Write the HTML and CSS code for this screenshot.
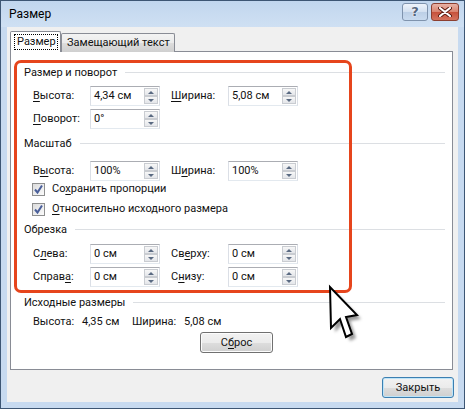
FILE: index.html
```html
<!DOCTYPE html>
<html lang="ru">
<head>
<meta charset="utf-8">
<title>Размер</title>
<link rel="stylesheet" href="styles.css">
</head>
<body>
<div class="window">
  <div class="titlebar">
    <span class="title">Размер</span>
    <div class="tb-btns">
      <span class="tb-btn help">?</span>
      <span class="tb-btn close">
        <svg width="14" height="10" viewBox="0 0 14 10"><path d="M2 1 L12 9 M12 1 L2 9" stroke="#5a1a10" stroke-width="4" stroke-linecap="round"/><path d="M2 1 L12 9 M12 1 L2 9" stroke="#fff" stroke-width="2.2" stroke-linecap="round"/></svg>
      </span>
    </div>
  </div>
  <div class="face">
    <div class="tabs">
      <div class="tab active"><span class="focus">Размер</span></div>
      <div class="tab">Замещающий текст</div>
    </div>
    <div class="panel">
      <div class="highlight"></div>

      <div class="grp-h g1">Размер и поворот</div>
      <div class="grid g-r1">
        <span class="lbl"><u>В</u>ысота:</span>
        <div class="spin"><span class="val">4,34 см</span><span class="arrows"><i class="up"></i><i class="dn"></i></span></div>
        <span class="lbl"><u>Ш</u>ирина:</span>
        <div class="spin"><span class="val">5,08 см</span><span class="arrows"><i class="up"></i><i class="dn"></i></span></div>
        <span class="lbl"><u>П</u>оворот:</span>
        <div class="spin"><span class="val">0°</span><span class="arrows"><i class="up"></i><i class="dn"></i></span></div>
      </div>

      <div class="grp-h g2">Масштаб</div>
      <div class="grid g-r2">
        <span class="lbl">В<u>ы</u>сота:</span>
        <div class="spin"><span class="val">100%</span><span class="arrows"><i class="up"></i><i class="dn"></i></span></div>
        <span class="lbl">Ш<u>и</u>рина:</span>
        <div class="spin"><span class="val">100%</span><span class="arrows"><i class="up"></i><i class="dn"></i></span></div>
      </div>
      <div class="check c1"><span class="box"><svg width="11" height="11" viewBox="0 0 11 11"><path d="M2 5.5 L4.5 8.5 L9 1.5" fill="none" stroke="#4a5f9a" stroke-width="2"/></svg></span><span>Со<u>х</u>ранить пропорции</span></div>
      <div class="check c2"><span class="box"><svg width="11" height="11" viewBox="0 0 11 11"><path d="M2 5.5 L4.5 8.5 L9 1.5" fill="none" stroke="#4a5f9a" stroke-width="2"/></svg></span><span><u>О</u>тносительно исходного размера</span></div>

      <div class="grp-h g3">Обрезка</div>
      <div class="grid g-r3">
        <span class="lbl">С<u>л</u>ева:</span>
        <div class="spin"><span class="val">0 см</span><span class="arrows"><i class="up"></i><i class="dn"></i></span></div>
        <span class="lbl">Св<u>е</u>рху:</span>
        <div class="spin"><span class="val">0 см</span><span class="arrows"><i class="up"></i><i class="dn"></i></span></div>
        <span class="lbl">Справ<u>а</u>:</span>
        <div class="spin"><span class="val">0 см</span><span class="arrows"><i class="up"></i><i class="dn"></i></span></div>
        <span class="lbl">С<u>н</u>изу:</span>
        <div class="spin"><span class="val">0 см</span><span class="arrows"><i class="up"></i><i class="dn"></i></span></div>
      </div>

      <div class="grp-h g4">Исходные размеры</div>
      <div class="orig">
        <span class="o1">Высота:</span><span class="o2">4,35 см</span><span class="o3">Ширина:</span><span>5,08 см</span>
      </div>
      <div class="reset-row"><button class="btn reset">С<u>б</u>рос</button></div>
    </div>
    <div class="footer"><button class="btn default">Закрыть</button></div>
  </div>
  <svg class="cursor" width="50" height="65" viewBox="0 0 50 65">
    <defs><filter id="bl" x="-20%" y="-20%" width="140%" height="140%"><feGaussianBlur stdDeviation="1.6"/></filter></defs>
    <polygon points="10,7 11,48 20,39 26,57 32,54 26,37 37,35" transform="translate(4,4)" fill="rgba(0,0,0,0.4)" filter="url(#bl)"/>
    <polygon points="10,7 11,48 20,39 26,57 32,54 26,37 37,35" fill="#fff" stroke="#000" stroke-width="2" stroke-linejoin="miter"/>
  </svg>
</div>
</body>
</html>
```

FILE: styles.css
```css
* { box-sizing: border-box; }
html, body { margin: 0; padding: 0; background: #fff; }
body {
  font-family: Roboto, "Noto Sans", sans-serif;
  font-size: 11px;
  line-height: 16px;
  color: #111;
  white-space: nowrap;
}
u { text-decoration: underline; text-underline-offset: 2px; }

.window {
  position: relative;
  width: 465px;
  height: 409px;
  border: 1px solid #3d5674;
  background: #c7daf0;
  display: flex;
  flex-direction: column;
}

.titlebar {
  height: 26px;
  display: flex;
  align-items: flex-start;
  padding: 0 5px 0 8px;
  background: linear-gradient(#c1d6ee, #cfe0f3);
}
.title { margin-top: 5px; color: #000; font-size: 12px; }
.tb-btns { margin-left: auto; display: flex; gap: 3px; padding-top: 2px; }
.tb-btn {
  width: 26px;
  height: 18px;
  border-radius: 3px;
  display: flex;
  align-items: center;
  justify-content: center;
}
.help {
  border: 1px solid #7f93ad;
  background: linear-gradient(#eef4fb, #d2e0f0 50%, #bccfe6 51%, #c9dbef);
  color: #56677e;
  font-family: "DejaVu Sans", sans-serif;
  font-weight: bold;
  font-size: 13px;
  text-shadow: 0 0 2px #fff, 0 0 1px #fff;
}
.close {
  width: 28px;
  border: 1px solid #8c3f30;
  background: linear-gradient(#e8b3a6, #d9826e 50%, #c7513b 51%, #d4735e);
}

.face {
  flex: 1;
  margin: 0 6px 6px 6px;
  background: #f0f0f0;
  padding: 4px 4px 0 3px;
  display: flex;
  flex-direction: column;
}

.tabs {
  display: flex;
  align-items: flex-end;
  height: 21px;
  margin-bottom: -1px;
  position: relative;
  z-index: 1;
}
.tab {
  height: 19px;
  padding: 0 4px 0 5px;
  border: 1px solid #898c95;
  border-bottom: none;
  background: linear-gradient(#f3f3f3, #ebebeb 50%, #dddddd 51%, #cfcfcf);
  border-radius: 2px 2px 0 0;
  display: flex;
  align-items: center;
  width: 114px;
}
.tab.active {
  height: 21px;
  width: 51px;
  background: #fff;
  padding: 2px 2px 0 3px;
  align-items: flex-start;
}
.focus {
  border: 1px dotted #000;
  padding: 0 2px;
  line-height: 14px;
  height: 16px;
  width: 44px;
}

.panel {
  position: relative;
  height: 319px;
  margin-right: 1px;
  border: 1px solid #898c95;
  background: #fff;
  padding: 13px 7px 0 13px;
}

.highlight {
  position: absolute;
  left: 3px;
  top: 8px;
  width: 338px;
  height: 233px;
  border: 3px solid #e6451c;
  border-radius: 7px;
  pointer-events: none;
}

.grp-h {
  display: flex;
  align-items: center;
  height: 16px;
  gap: 8px;
}
.grp-h::after {
  content: "";
  flex: 1;
  height: 1px;
  background: #dcdfe3;
  margin-top: -2px;
}
.g2 { margin-top: 7px; }
.g3 { margin-top: 5px; }
.g4 { margin-top: 8px; }

.grid {
  display: grid;
  grid-template-columns: 57px 81px 57px 70px;
  grid-auto-rows: 20px;
  row-gap: 3px;
  margin-left: 9px;
  align-items: center;
}
.g-r1 { margin-top: 5px; }
.g-r2 { margin-top: 9px; }
.g-r3 { margin-top: 6px; }

.spin {
  width: 70px;
  height: 20px;
  border: 1px solid #abadb3;
  border-left-color: #dbdfe6;
  border-right-color: #dbdfe6;
  border-bottom-color: #e3e9ef;
  display: flex;
  background: #fff;
}
.val { flex: 1; padding-left: 3px; line-height: 18px; }
.arrows {
  width: 15px;
  display: flex;
  flex-direction: column;
  padding: 1px 1px 1px 0;
}
.arrows i {
  flex: 1;
  border: 1px solid #c9ccd1;
  background: linear-gradient(#f7f7f7, #e4e6ea);
  display: flex;
  align-items: center;
  justify-content: center;
}
.arrows i::before {
  content: "";
  width: 0;
  height: 0;
  border-left: 3px solid transparent;
  border-right: 3px solid transparent;
}
.arrows .up::before { border-bottom: 3px solid #5a6a82; }
.arrows .dn::before { border-top: 3px solid #5a6a82; }

.check {
  display: flex;
  align-items: center;
  height: 16px;
  margin-left: 8px;
  gap: 7px;
}
.c2 { margin-top: 4px; }
.box {
  width: 13px;
  height: 13px;
  border: 1px solid #8e8f8f;
  background: linear-gradient(135deg, #dcdcdc, #fbfbfb);
  display: flex;
  align-items: center;
  justify-content: center;
}

.orig {
  display: flex;
  margin-top: 3px;
  margin-left: 9px;
  height: 16px;
}
.o1 { width: 49px; }
.o2 { width: 50px; }
.o3 { width: 52px; }

.reset-row { margin-top: 2px; padding-left: 176px; }

.btn {
  font-family: inherit;
  font-size: 11px;
  color: #111;
  height: 21px;
  border: 1px solid #707070;
  border-radius: 3px;
  background: linear-gradient(#f2f2f2, #ebebeb 50%, #dddddd 51%, #cfcfcf);
  box-shadow: inset 0 0 0 1px #fcfcfc;
  padding: 0;
  line-height: 17px;
}
.reset { width: 73px; }
.footer {
  display: flex;
  justify-content: flex-end;
  margin-top: 7px;
}
.default {
  width: 72px;
  border-color: #3c7fb1;
  box-shadow: inset 0 0 0 1px #bde4f8;
}

.cursor {
  position: absolute;
  left: 319px;
  top: 279px;
}
```
